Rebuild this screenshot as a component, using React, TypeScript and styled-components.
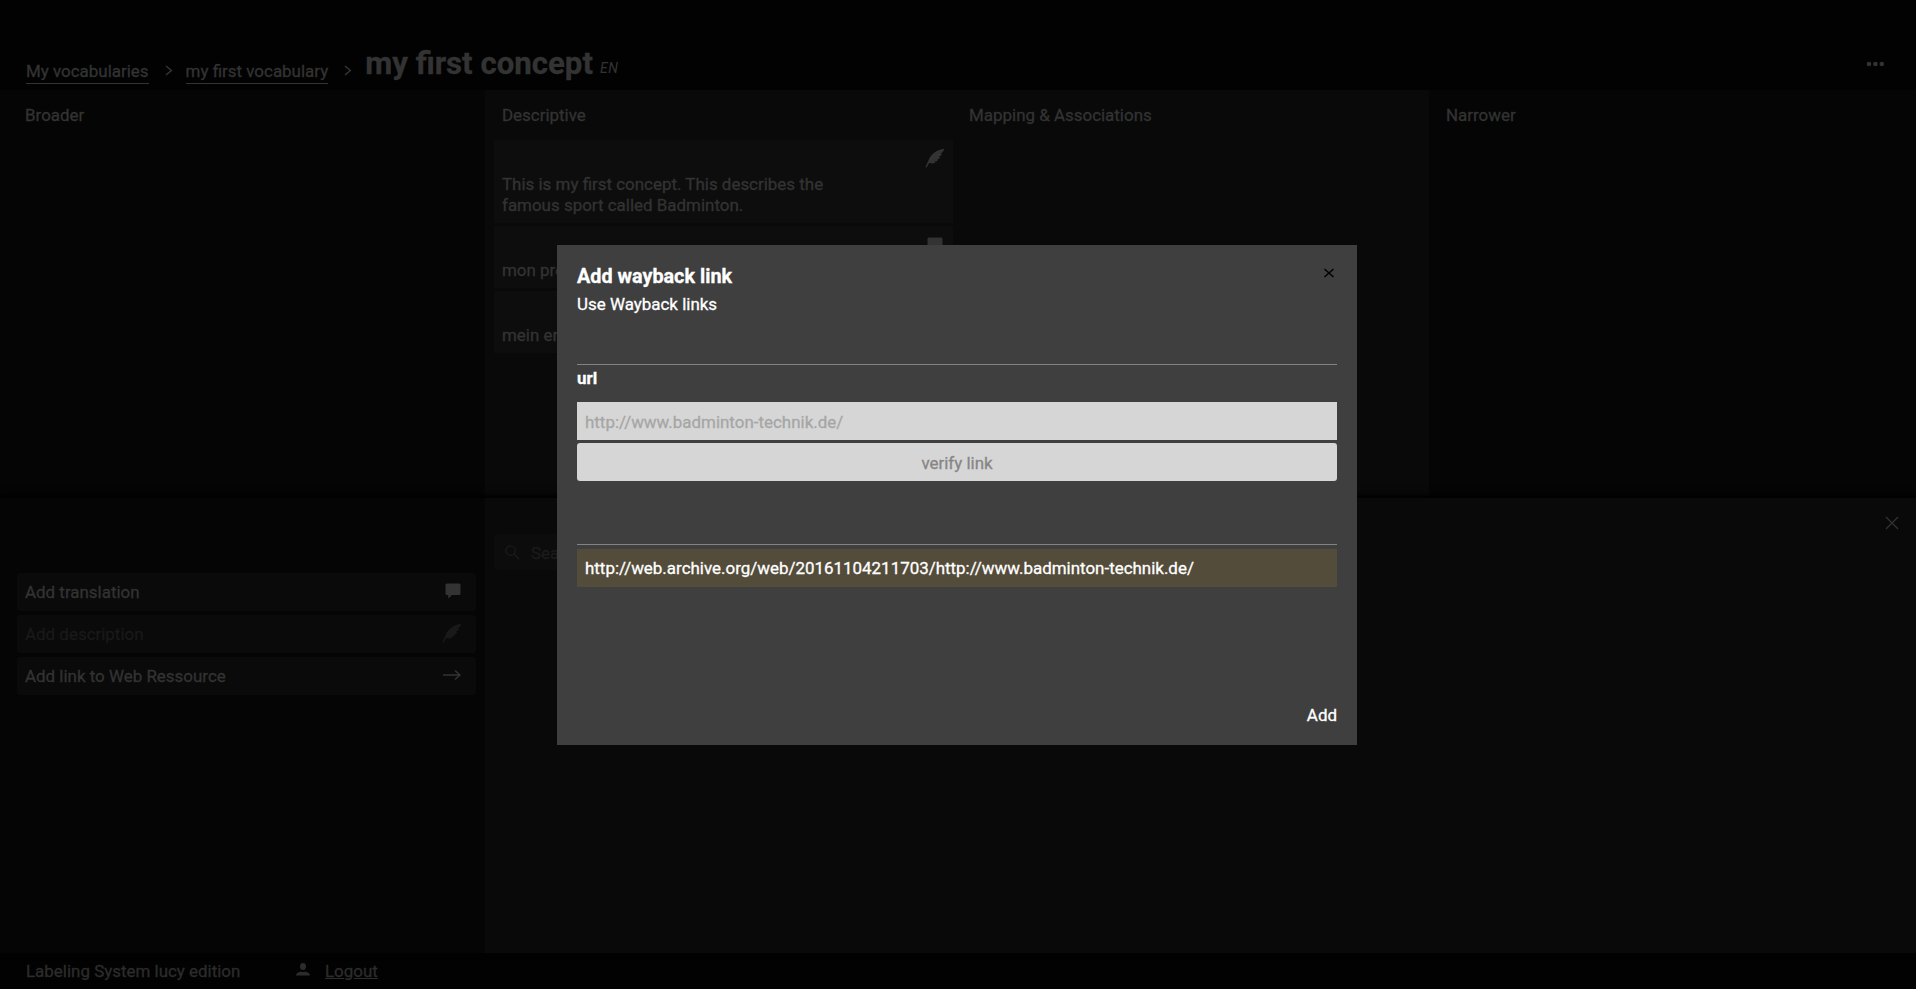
import React from "react";
import styled, { createGlobalStyle } from "styled-components";

const Global = createGlobalStyle`
  * { box-sizing: border-box; }
  body {
    margin: 0; background: #020202; color: #333; font: 400 16.96px/21px Roboto, sans-serif; overflow: hidden;
    -webkit-text-stroke: 0.3px currentColor;
  }
`;
const Page = styled.div`display: flex; flex-direction: column; height: 989px;`;
const Header = styled.header`
  height: 90px; padding: 0 31px 0 26px; display: flex; justify-content: space-between;
`;
const Crumbs = styled.nav`display: flex; align-items: flex-start; padding-top: 42px;`;
const Crumb = styled.a`color: #333; border-bottom: 1px solid #333; padding-bottom: 1px; margin-top: 19px;`;
const Chevron = styled.svg`width: 8px; height: 11px; margin: 23px 13px 0 16px;`;
const Title = styled.h1`margin: 1px 0 0; font-size: 31.2px; line-height: 42px; font-weight: 700;`;
const Lang = styled.em`font-size: 14px; letter-spacing: 0.7px; margin: 16px 0 0 7px; -webkit-text-stroke: 0;`;
const Dots = styled.svg`width: 20px; height: 8px; margin-top: 60px;`;
const Upper = styled.main`display: flex; height: 408px;`;
const Middle = styled.div`display: flex; width: 944px; background: #090909;`;
const Side = styled.section<{ $w: number }>`width: ${(p) => p.$w}px; background: #050505; padding: 15px 18px 0 ${(p) => (p.$w === 485 ? 25 : 17)}px;`;
const Column = styled.section<{ $w: number }>`width: ${(p) => p.$w}px; padding: 15px 0 0 9px;`;
const Heading = styled.div`padding-left: 8px; margin-bottom: 14px;`;
const Card = styled.article<{ $h: number }>`
  display: flex; justify-content: space-between; width: 459px; height: ${(p) => p.$h}px;
  margin-bottom: 3px; padding: 34px 8px 0; background: #0d0d0d;
`;
const CardText = styled.p`margin: 0; width: 345px;`;
const CardIcon = styled.div<{ $bubble?: boolean }>`
  height: 22px; margin-top: ${(p) => (p.$bubble ? -23 : -26)}px; margin-right: ${(p) => (p.$bubble ? 2 : 0)}px;
`;
const Lower = styled.section`
  position: relative; display: flex; height: 455px; background: #090909; box-shadow: 0 -2px 6px 1px #000;
`;
const Actions = styled.div`
  display: flex; flex-direction: column; gap: 4px; width: 485px; padding: 75px 9px 0 17px; background: #050505;
`;
const Action = styled.button<{ $off?: boolean }>`
  display: flex; align-items: center; justify-content: space-between; height: 38px; border: 0; border-radius: 3px;
  padding: 0 ${(p) => (p.$off ? 14 : 15)}px 0 8px; background: #0a0a0a; color: ${(p) => (p.$off ? "#191919" : "#333")}; font: inherit;
  svg { margin-bottom: 2px; }
`;
const Work = styled.div`flex: 1; display: flex; justify-content: space-between; padding: 18px 17px 0 9px;`;
const Search = styled.div`
  display: flex; align-items: center; gap: 11px; width: 459px; height: 36px; margin-top: 18px; padding: 2px 0 0 11px;
  border-radius: 3px; background: #0c0c0c; color: #1b1b1b;
  svg { margin-bottom: 2px; }
`;
const Footer = styled.footer`display: flex; align-items: center; height: 36px; padding-left: 26px; color: #2c2c2c;`;
const Product = styled.span`width: 270px;`;
const Logout = styled.a`text-decoration: underline; margin-left: 15px;`;
const UserIcon = styled.svg`width: 14px; height: 13px; margin-bottom: 4px;`;
const Modal = styled.div`
  position: absolute; left: 557px; top: 245px; width: 800px; height: 500px; padding: 20px;
  display: flex; flex-direction: column; background: #3f3f3f; color: #fff;
`;
const ModalHead = styled.div`display: flex; justify-content: space-between; height: 99px; padding-right: 2px;`;
const ModalTitle = styled.h2`margin: 0 0 6px; font-size: 19.8px; line-height: 23px; font-weight: 700;`;
const CloseIcon = styled.svg`width: 12px; height: 12px; margin-top: 2px;`;
const Field = styled.div`border-top: 1px solid #838383; height: 180px; padding-top: 3px;`;
const Label = styled.label`display: block; font-weight: 700; height: 34px;`;
const Input = styled.div`height: 38px; padding: 10px 8px 0; background: #d6d6d6; color: #a6a6a6;`;
const Verify = styled.button`
  display: block; width: 100%; height: 38px; margin-top: 3px; border: 0; border-radius: 3px; background: #d6d6d6;
  color: #868686; font: inherit; padding: 2px 0 0;
`;
const Result = styled.div`border-top: 1px solid #838383; padding-top: 4px;`;
const Link = styled.div`height: 38px; padding: 9px 8px; background: #544c3a;`;
const Add = styled.div`margin-top: auto; align-self: flex-end; line-height: 19px;`;

const Feather = () => (
  <svg width="20" height="20" viewBox="0 0 20 20" fill="currentColor">
    <path d="M19.400 .8C12 1.600 6.500 5.500 3.700 11.800 2.800 14 1.800 16.600 .4 18.900L1.700 19.400 4.300 14.800C7 15.900 9.800 15.400 10.600 14.300L8.800 13.600C11 13.700 12.500 13 13.200 11.700L11.400 11.300C13.400 11.200 14.700 10.300 15.300 8.900L13.600 8.700C15.400 8.200 16.400 7.200 16.900 5.900L15.500 5.900C17.200 5 18.600 3.200 19.400 .8Z" />
  </svg>
);
const Bubble = () => (
  <svg width="16" height="16" viewBox="0 0 16 16" fill="currentColor">
    <path d="M2 .5h12q1.500 0 1.500 1.500v8.500q0 1.500-1.500 1.500H7L3.200 15.500V12H2Q.5 12 .5 10.500V2Q.5 .5 2 .5Z" />
  </svg>
);
const Next = () => (
  <Chevron viewBox="0 0 8 11" fill="none" stroke="#333" strokeWidth="1.6"><path d="M1 1l5.300 4.500L1 10" /></Chevron>
);

export default function App() {
  return (
    <>
      <Global />
      <Page>
        <Header>
          <Crumbs>
            <Crumb>My vocabularies</Crumb><Next />
            <Crumb>my first vocabulary</Crumb><Next />
            <Title>my first concept</Title><Lang>EN</Lang>
          </Crumbs>
          <Dots viewBox="0 0 20 8" fill="#333"><circle cx="4" cy="4" r="2.300" /><circle cx="10.400" cy="4" r="2.300" /><circle cx="16.800" cy="4" r="2.300" /></Dots>
        </Header>
        <Upper>
          <Side $w={485}>Broader</Side>
          <Middle>
            <Column $w={467}>
              <Heading>Descriptive</Heading>
              <Card $h={83}>
                <CardText>This is my first concept. This describes the famous sport called Badminton.</CardText>
                <CardIcon><Feather /></CardIcon>
              </Card>
              <Card $h={62}><CardText>mon premier concept</CardText><CardIcon $bubble><Bubble /></CardIcon></Card>
              <Card $h={62}><CardText>mein erstes Konzept</CardText></Card>
            </Column>
            <Column $w={477}><Heading>Mapping &amp; Associations</Heading></Column>
          </Middle>
          <Side $w={487}>Narrower</Side>
        </Upper>
        <Lower>
          <Actions>
            <Action>Add translation<Bubble /></Action>
            <Action $off>Add description<Feather /></Action>
            <Action>Add link to Web Ressource
              <svg width="18" height="12" viewBox="0 0 18 12" fill="none" stroke="currentColor" strokeWidth="1.5"><path d="M0 6h17M12 1.500l5 4.500-5 4.500" /></svg>
            </Action>
          </Actions>
          <Work>
            <Search>
              <svg width="15" height="15" viewBox="0 0 15 15" fill="none" stroke="currentColor" strokeWidth="1.300"><circle cx="5.500" cy="5.500" r="4.700" /><path d="M9 9l5 5" /></svg>
              Search
            </Search>
            <svg width="14" height="14" viewBox="0 0 14 14" stroke="#333" strokeWidth="1.200"><path d="M1 1l12 12M13 1L1 13" /></svg>
          </Work>
        </Lower>
        <Footer>
          <Product>Labeling System lucy edition</Product>
          <UserIcon viewBox="0 0 14 13" fill="currentColor"><ellipse cx="7" cy="3.500" rx="3" ry="3.500" /><path d="M0 12.500Q0 9.500 5 8.500q2 1 4 0 5 1 5 4Z" /></UserIcon>
          <Logout>Logout</Logout>
        </Footer>
      </Page>
      <Modal>
        <ModalHead>
          <div><ModalTitle>Add wayback link</ModalTitle>Use Wayback links</div>
          <CloseIcon viewBox="0 0 12 12" stroke="#000" strokeWidth="1.500"><path d="M1.500 2l9 8M10.500 2l-9 8" /></CloseIcon>
        </ModalHead>
        <Field>
          <Label>url</Label>
          <Input>http://www.badminton-technik.de/</Input>
          <Verify>verify link</Verify>
        </Field>
        <Result><Link>http://web.archive.org/web/20161104211703/http://www.badminton-technik.de/</Link></Result>
        <Add>Add</Add>
      </Modal>
    </>
  );
}
